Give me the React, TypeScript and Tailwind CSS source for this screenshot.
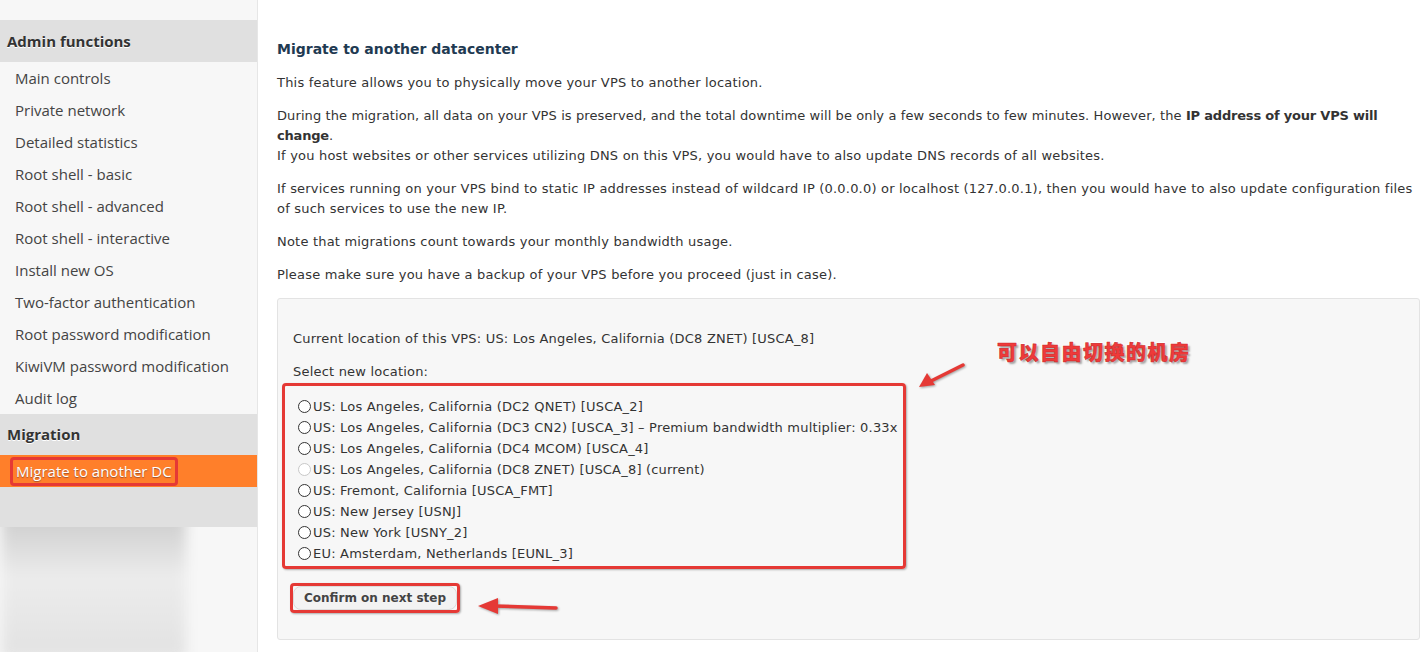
import React from 'react';

const menuItems = [
  'Main controls',
  'Private network',
  'Detailed statistics',
  'Root shell - basic',
  'Root shell - advanced',
  'Root shell - interactive',
  'Install new OS',
  'Two-factor authentication',
  'Root password modification',
  'KiwiVM password modification',
  'Audit log',
];

const locations = [
  { label: 'US: Los Angeles, California (DC2 QNET) [USCA_2]' },
  { label: 'US: Los Angeles, California (DC3 CN2) [USCA_3] \u2013 Premium bandwidth multiplier: 0.33x' },
  { label: 'US: Los Angeles, California (DC4 MCOM) [USCA_4]' },
  { label: 'US: Los Angeles, California (DC8 ZNET) [USCA_8] (current)', disabled: true },
  { label: 'US: Fremont, California [USCA_FMT]' },
  { label: 'US: New Jersey [USNJ]' },
  { label: 'US: New York [USNY_2]' },
  { label: 'EU: Amsterdam, Netherlands [EUNL_3]' },
];

function Sidebar() {
  return (
    <div className="w-[258px] shrink-0 bg-[#f7f7f7] border-r border-[#e6e6e6] font-['Open_Sans',sans-serif] text-[15px] text-[#444]">
      <div className="h-[20px]" />
      <div className="h-[42px] bg-[#e0e0e0] px-[7px] flex items-center font-bold text-[#333] [text-shadow:0_1px_0_#fff]">
        Admin functions
      </div>
      {menuItems.map((item) => (
        <div key={item} className="h-[32px] px-[15px] flex items-center">
          {item}
        </div>
      ))}
      <div className="h-[41px] bg-[#e0e0e0] px-[7px] flex items-center font-bold text-[#333] [text-shadow:0_1px_0_#fff]">
        Migration
      </div>
      <div className="h-[32px] bg-[#ff7f2a] pl-[10px] flex items-center">
        <span className="border-[3px] border-[#e53935] rounded-[4px] px-[3px] h-[29px] flex items-center text-white [text-shadow:0_1px_1px_#a0522d]">
          Migrate to another DC
        </span>
      </div>
      <div className="h-[40px] bg-[#e0e0e0]" />
      <div className="relative h-[125px] overflow-hidden">
        <div className="absolute left-[2px] top-[-29px] w-[184px] h-[160px] bg-gradient-to-b from-[#c4c4c4] via-[#ececec] to-[#e2e2e2] blur-[6px]" />
      </div>
    </div>
  );
}

function Radio({ disabled }: { disabled?: boolean }) {
  return (
    <span
      className={`inline-block w-[13px] h-[13px] rounded-full border ${
        disabled ? 'border-[#c8c8c8]' : 'border-[#333]'
      } bg-white mr-[2px] shrink-0`}
    />
  );
}

function Annotations() {
  return (
    <>
      <svg className="absolute left-[915px] top-[360px]" width="55" height="32" viewBox="0 0 55 32">
        <g filter="drop-shadow(1px 1px 1px rgba(0,0,0,0.35))">
          <line x1="48" y1="5" x2="14" y2="22" stroke="#e53935" strokeWidth="3.5" strokeLinecap="round" />
          <polygon points="4,27 12,13 20,25" fill="#e53935" />
        </g>
      </svg>
      <svg className="absolute left-[474px] top-[596px]" width="88" height="22" viewBox="0 0 88 22">
        <g filter="drop-shadow(1px 1px 1px rgba(0,0,0,0.35))">
          <line x1="82" y1="12" x2="20" y2="10" stroke="#e53935" strokeWidth="3.5" strokeLinecap="round" />
          <polygon points="4,10 24,2 24,18" fill="#e53935" />
        </g>
      </svg>
      <div className="absolute left-[997px] top-[337px] font-['Noto_Sans_CJK_SC',sans-serif] font-black text-[20px] tracking-[1.5px] text-[#ef3a3a] [-webkit-text-stroke:0.5px_#c62828] [text-shadow:2px_2px_2px_rgba(0,0,0,0.35),-1px_-1px_0_#fff,1px_-1px_0_#fff,-1px_1px_0_#fff]">
        可以自由切换的机房
      </div>
    </>
  );
}

export default function App() {
  return (
    <div className="relative flex min-h-screen bg-white">
      <Sidebar />
      <div className="flex-1 pl-[19px] pr-[8px] pt-[39px] font-['DejaVu_Sans',sans-serif] text-[13px] leading-[20px] text-[#333] tracking-[0.2px]">
        <h2 className="font-bold text-[14px] text-[#1f3a52] mb-[14px] tracking-[0px]">Migrate to another datacenter</h2>
        <p className="mb-[13px]">This feature allows you to physically move your VPS to another location.</p>
        <p className="tracking-[0.1px]">
          During the migration, all data on your VPS is preserved, and the total downtime will be only a few seconds to few minutes. However, the{' '}
          <b className="tracking-[-0.2px]">IP address of your VPS will change</b>.
        </p>
        <p className="mb-[13px]">If you host websites or other services utilizing DNS on this VPS, you would have to also update DNS records of all websites.</p>
        <p className="mb-[13px]">
          If services running on your VPS bind to static IP addresses instead of wildcard IP (0.0.0.0) or localhost (127.0.0.1), then you would have to also update configuration files of such services to use the new IP.
        </p>
        <p className="mb-[13px]">Note that migrations count towards your monthly bandwidth usage.</p>
        <p className="mb-[13px]">Please make sure you have a backup of your VPS before you proceed (just in case).</p>

        <div className="bg-[#f7f7f7] border border-[#e3e3e3] rounded-[3px] pl-[4px] pt-[30px] pb-[26px]">
          <p className="pl-[11px] mb-[13px]">Current location of this VPS: US: Los Angeles, California (DC8 ZNET) [USCA_8]</p>
          <p className="pl-[11px] mb-[1px]">Select new location:</p>
          <div className="w-[624px] border-[3px] border-[#e53935] rounded-[4px] pl-[13px] pt-[10px] pb-[2px] shadow-[1px_1px_2px_rgba(0,0,0,0.3)]">
            {locations.map((loc) => (
              <label key={loc.label} className="flex items-center h-[21px] leading-[21px]">
                <Radio disabled={loc.disabled} />
                <span>{loc.label}</span>
              </label>
            ))}
          </div>
          <div className="mt-[14px] ml-[8px] inline-flex border-[3px] border-[#e53935] rounded-[4px] shadow-[1px_1px_2px_rgba(0,0,0,0.3)]">
            <button className="h-[24px] w-[164px] rounded-[8px] bg-[#f3f3f3] border border-[#dcdcdc] text-[12px] font-bold text-[#444] tracking-[0px]">
              Confirm on next step
            </button>
          </div>
        </div>
      </div>
      <Annotations />
    </div>
  );
}
